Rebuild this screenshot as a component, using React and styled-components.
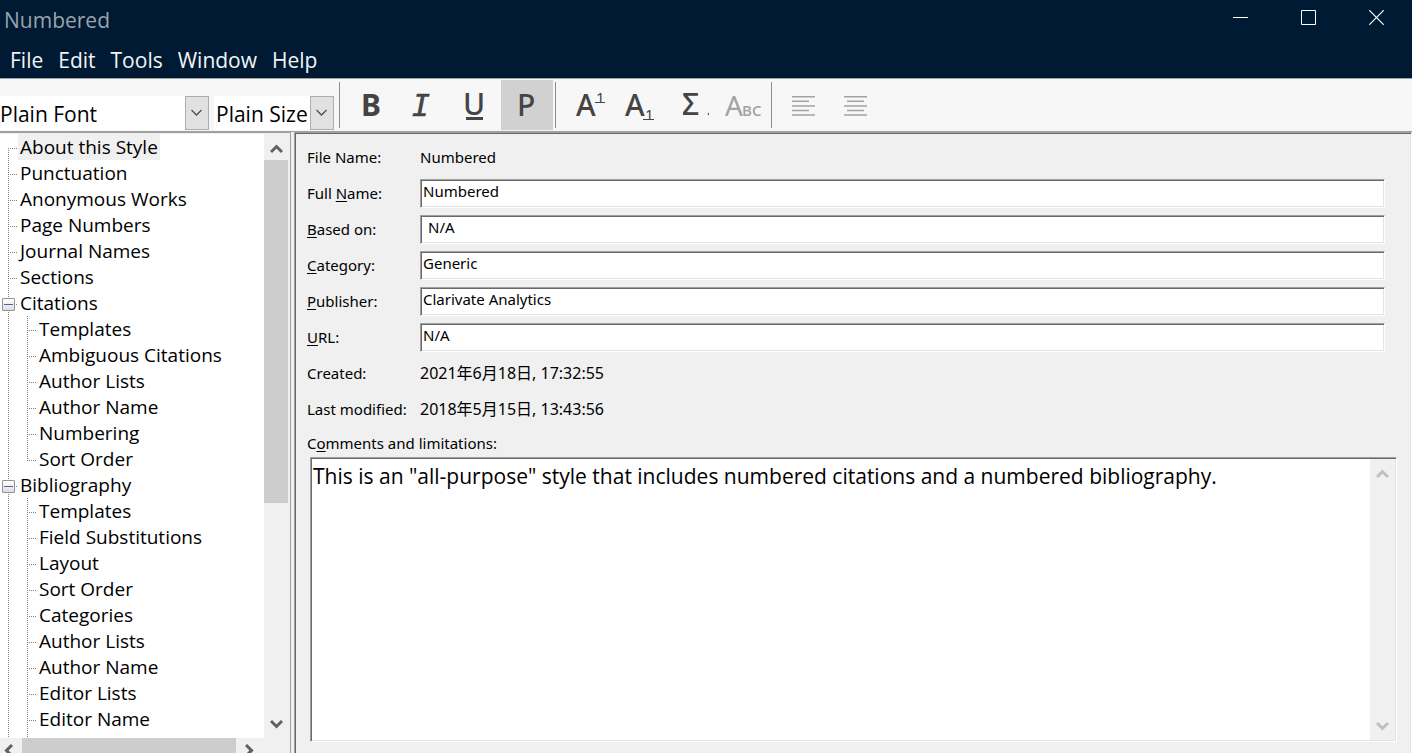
import React from "react";
import styled, { createGlobalStyle, css } from "styled-components";

const uiFont = `"Open Sans", "Noto Sans CJK SC", sans-serif`;
const formFont = `"Noto Sans", "Noto Sans CJK SC", sans-serif`;

const GlobalStyle = createGlobalStyle`
  *, *::before, *::after { box-sizing: border-box; }
  body { margin: 0; font-family: ${uiFont}; color: #000; background: #f0f0f0; }
  button, input, select, textarea { font-family: inherit; color: inherit; border-radius: 0; outline: none; }
`;

const sunken = css`
  border: 1px solid;
  border-color: #a0a0a0 #fff #fff #a0a0a0;
  box-shadow: inset 1px 1px #696969, inset -1px -1px #e3e3e3;
`;

const Window = styled.div`
  display: flex;
  flex-direction: column;
  height: 100vh;
  overflow: hidden;
`;

const Header = styled.header`
  background: #001a33;
  color: #f2f4f6;
`;

const TitleBar = styled.div`
  display: flex;
  justify-content: space-between;
  height: 40px;
  padding: 0 2px 0 4px;
`;

const Title = styled.h1`
  margin: 0;
  font-size: 21px;
  font-weight: 400;
  line-height: 40px;
  color: #99a3ad;
`;

const WindowControls = styled.div`
  display: flex;
`;

const WindowButton = styled.button`
  display: flex;
  align-items: center;
  justify-content: center;
  width: 68px;
  height: 35px;
  padding: 0;
  border: 0;
  background: none;
`;

const MenuBar = styled.nav`
  display: flex;
  gap: 15px;
  height: 38px;
  padding-left: 10px;
`;

const MenuItem = styled.button`
  padding: 0;
  border: 0;
  background: none;
  font-size: 21px;
  line-height: 40px;
`;

const Toolbar = styled.div`
  display: flex;
  align-items: flex-start;
  height: 54px;
  flex: none;
  border-top: 1px solid #a0a0a0;
  border-bottom: 1px solid #a0a0a0;
  background: #f7f7f7;
`;

const Combos = styled.div`
  display: flex;
  gap: 5px;
  padding: 17px 5px 0 0;
`;

const Combo = styled.div`
  display: grid;
  grid-template-columns: 1fr 24px;
  width: ${(p) => p.$width}px;
  height: 34px;
  background: #fff;
`;

const ComboSelect = styled.select`
  grid-area: 1 / 1 / 2 / 3;
  appearance: none;
  padding: 2px 0 0 ${(p) => p.$indent}px;
  border: 0;
  background: none;
  font-size: 21px;
  line-height: 32px;
`;

const ComboArrow = styled.span`
  grid-area: 1 / 2 / 2 / 3;
  display: flex;
  align-items: center;
  justify-content: center;
  border: 1px solid #adadad;
  background: #e1e1e1;
  pointer-events: none;
`;

const ToolGroup = styled.div`
  display: flex;
  margin-top: 1px;
  padding: 0 2px 0 5px;
`;

const ToolButton = styled.button`
  width: 52px;
  height: 50px;
  padding: 0;
  border: 0;
  background: ${(p) => (p.$active ? "#d1d1d1" : "none")};

  svg { display: block; }
`;

const Separator = styled.span`
  width: 1px;
  height: 46px;
  margin-top: 3px;
  background: #8c8c8c;
`;

const Body = styled.div`
  display: flex;
  flex: 1;
  min-height: 0;
  gap: 3px;
`;

const Sidebar = styled.aside`
  display: grid;
  grid-template: 1fr 15px / 1fr 24px;
  width: 291px;
  flex: none;
  padding: 1px 2px 0 0;
  border-top: 1px solid #a0a0a0;
  border-right: 1px solid #a0a0a0;
`;

const Tree = styled.ul`
  display: flex;
  flex-direction: column;
  min-height: 0;
  margin: 0;
  padding: 0;
  list-style: none;
  overflow: hidden;
  background: #fff;
`;

const TreeRow = styled.li`
  display: flex;
  flex: none;
  height: 26px;
`;

const TreeTail = styled.li`
  display: flex;
  flex: 1;
`;

const dotsDown = "repeating-linear-gradient(to bottom, #808080 0 1px, transparent 1px 2px)";
const dotsAcross = "repeating-linear-gradient(to right, #808080 0 1px, transparent 1px 2px)";

const vertical = {
  full: ["0", "100%"],
  down: ["14px", "12px"],
  up: ["0", "14px"],
};

const Branch = styled.span`
  display: flex;
  align-items: flex-end;
  flex: none;
  width: ${(p) => (p.$nested ? 19 : 18)}px;
  padding: 0 0 5px 2px;
  background-image: ${dotsDown}, ${dotsAcross};
  background-repeat: no-repeat;
  background-size: 1px ${(p) => vertical[p.$line][1]}, ${(p) => (p.$tick ? 9 : 0)}px 1px;
  background-position: ${(p) => (p.$nested ? 9 : 8)}px ${(p) => vertical[p.$line][0]},
    ${(p) => (p.$nested ? 9 : 8)}px 14px;
`;

const Expander = styled.button`
  display: flex;
  align-items: center;
  justify-content: center;
  width: 13px;
  height: 13px;
  padding: 0;
  border: 1px solid #919191;
  border-radius: 1px;
  background: linear-gradient(#fff, #dedede);

  &::before {
    content: "";
    width: 9px;
    height: 1px;
    background: #4b63a7;
  }
`;

const TreeLabel = styled.span`
  padding: 0 2px;
  font-size: 19px;
  line-height: 26px;
  white-space: nowrap;
  background: ${(p) => (p.$selected ? "#f0f0f0" : "none")};
`;

const ScrollColumn = styled.div`
  display: flex;
  flex-direction: column;
  align-items: center;
  width: ${(p) => p.$width}px;
  padding: 9px 0;
  background: #f0f0f0;

  svg { flex: none; }
`;

const ThumbV = styled.div`
  width: 100%;
  height: 343px;
  margin-top: 6px;
  background: #cdcdcd;
`;

const Spacer = styled.div`
  flex: 1;
`;

const ScrollRow = styled.div`
  display: flex;
  align-items: flex-start;
  overflow: hidden;
  padding: 0 10px 0 4px;

  svg { flex: none; margin-top: 6px; }
`;

const ThumbH = styled.div`
  flex: 1;
  height: 15px;
  margin: 0 9px;
  background: #cdcdcd;
`;

const Panel = styled.main`
  ${sunken}
  display: flex;
  flex-direction: column;
  flex: 1;
  min-width: 0;
  padding: 10px 14px 11px 12px;
  border-bottom: 0;
  box-shadow: inset 1px 1px #696969, inset -1px 0 #e3e3e3;
  font-family: ${formFont};
`;

const Fields = styled.div`
  display: grid;
  grid-template-columns: 113px 1fr;
  grid-auto-rows: 29px;
  row-gap: 7px;
  padding-right: 12px;
  font-size: 15px;
`;

const FieldLabel = styled.label`
  line-height: 29px;
  white-space: nowrap;
`;

const Key = styled.u`
  text-underline-offset: 2px;
  text-decoration-thickness: 1px;
`;

const FieldValue = styled.output`
  font-size: ${(p) => (p.$date ? 16 : 15)}px;
  line-height: 28px;
`;

const FieldInput = styled.input`
  ${sunken}
  width: 100%;
  height: 29px;
  padding: 0 2px 5px ${(p) => (p.$indent ? 7 : 2)}px;
  background: #fff;
  font-size: 15px;
`;

const CommentsLabel = styled.label`
  margin-top: 6px;
  font-size: 15px;
  line-height: 27px;
`;

const CommentsBox = styled.div`
  ${sunken}
  display: flex;
  flex: 1;
  min-height: 0;
  margin-left: 3px;
  padding: 1px;
  background: #fff;
  font-family: ${uiFont};
`;

const Comments = styled.textarea`
  flex: 1;
  min-width: 0;
  padding: 1px 1px;
  border: 0;
  resize: none;
  overflow: hidden;
  background: none;
  font-size: 21px;
  line-height: 32px;
`;

const arrowPaths = {
  up: "M1 9 L6.500 3.500 L12 9",
  down: "M1 3 L6.500 8.500 L12 3",
};

function Arrow({ dir, color = "#606060" }) {
  return (
    <svg width="13" height="11" viewBox="0 0 13 11" fill="none" stroke={color} strokeWidth="3">
      <path d={arrowPaths[dir]} />
    </svg>
  );
}

function SideArrow({ dir }) {
  return (
    <svg width="9" height="13" viewBox="0 0 9 13" fill="none" stroke="#606060" strokeWidth="3">
      <path d={dir === "left" ? "M8 1 L2.500 6.500 L8 12" : "M1 1 L6.500 6.500 L1 12"} />
    </svg>
  );
}

function FontCombo({ label, width, indent }) {
  return (
    <Combo $width={width}>
      <ComboSelect aria-label={label} $indent={indent} defaultValue={label}>
        <option>{label}</option>
      </ComboSelect>
      <ComboArrow>
        <svg width="12" height="8" viewBox="0 0 12 8" fill="none" stroke="#505050" strokeWidth="1.300">
          <path d="M.5 1 L5.500 6 L10.500 1" />
        </svg>
      </ComboArrow>
    </Combo>
  );
}

const ink = "#444";
const faint = "#a3a3a3";

function Tool({ name, active, children }) {
  return (
    <ToolButton aria-label={name} title={name} $active={active}>
      <svg width="52" height="50" viewBox="0 0 52 50" fill={ink} fontFamily="Noto Sans" fontSize="30">
        {children}
      </svg>
    </ToolButton>
  );
}

const tree = [
  { name: "About this Style", selected: true },
  { name: "Punctuation" },
  { name: "Anonymous Works" },
  { name: "Page Numbers" },
  { name: "Journal Names" },
  { name: "Sections" },
  {
    name: "Citations",
    children: ["Templates", "Ambiguous Citations", "Author Lists", "Author Name", "Numbering", "Sort Order"],
  },
  {
    name: "Bibliography",
    open: true,
    children: [
      "Templates",
      "Field Substitutions",
      "Layout",
      "Sort Order",
      "Categories",
      "Author Lists",
      "Author Name",
      "Editor Lists",
      "Editor Name",
    ],
  },
];

function StyleTree() {
  return (
    <Tree aria-label="Style sections">
      {tree.map((node, i) => (
        <React.Fragment key={node.name}>
          <TreeRow>
            <Branch $line={i === 0 ? "down" : "full"} $tick>
              {node.children && <Expander aria-label={`Collapse ${node.name}`} />}
            </Branch>
            <TreeLabel $selected={node.selected}>{node.name}</TreeLabel>
          </TreeRow>
          {node.children?.map((child, n) => (
            <TreeRow key={child}>
              <Branch $line="full" />
              <Branch $nested $tick $line={!node.open && n === node.children.length - 1 ? "up" : "full"} />
              <TreeLabel>{child}</TreeLabel>
            </TreeRow>
          ))}
        </React.Fragment>
      ))}
      <TreeTail aria-hidden="true">
        <Branch $line="full" />
        <Branch $nested $line="full" />
      </TreeTail>
    </Tree>
  );
}

function TextField({ id, before = "", hotkey, after, value, indent }) {
  return (
    <>
      <FieldLabel htmlFor={id}>
        {before}
        <Key>{hotkey}</Key>
        {after}
      </FieldLabel>
      <FieldInput id={id} defaultValue={value} $indent={indent} />
    </>
  );
}

function ReadOnlyField({ id, label, value, date }) {
  return (
    <>
      <FieldLabel htmlFor={id}>{label}</FieldLabel>
      <FieldValue id={id} $date={date}>{value}</FieldValue>
    </>
  );
}

export default function App() {
  return (
    <Window>
      <GlobalStyle />
      <Header>
        <TitleBar>
          <Title>Numbered</Title>
          <WindowControls>
            <WindowButton aria-label="Minimize">
              <svg width="15" height="15" viewBox="0 0 15 15" stroke="#fff"><path d="M0 7.500H15" /></svg>
            </WindowButton>
            <WindowButton aria-label="Maximize">
              <svg width="15" height="15" viewBox="0 0 15 15" fill="none" stroke="#fff"><path d="M.5 .5H14.500V14.500H.5Z" /></svg>
            </WindowButton>
            <WindowButton aria-label="Close">
              <svg width="15" height="15" viewBox="0 0 15 15" stroke="#fff" strokeWidth="1.200"><path d="M.3 .3L14.700 14.700M14.700 .3L.3 14.700" /></svg>
            </WindowButton>
          </WindowControls>
        </TitleBar>
        <MenuBar>
          {["File", "Edit", "Tools", "Window", "Help"].map((item) => (
            <MenuItem key={item}>{item}</MenuItem>
          ))}
        </MenuBar>
      </Header>

      <Toolbar>
        <Combos>
          <FontCombo label="Plain Font" width={209} indent={0} />
          <FontCombo label="Plain Size" width={120} indent={2} />
        </Combos>
        <Separator />
        <ToolGroup>
          <Tool name="Bold"><text x="16" y="36" fontWeight="700">B</text></Tool>
          <Tool name="Italic">
            <text x="15" y="36" fontFamily="DejaVu Sans Mono" fontStyle="italic" stroke={ink} strokeWidth="0.6">I</text>
          </Tool>
          <Tool name="Underline">
            <text x="14" y="35" fontWeight="500">U</text>
            <rect x="17" y="37" width="17" height="3" />
          </Tool>
          <Tool name="Plain" active><text x="16" y="36" fontWeight="500">P</text></Tool>
        </ToolGroup>
        <Separator />
        <ToolGroup>
          <Tool name="Superscript">
            <text x="15" y="36" fontWeight="500">A</text>
            <text x="35" y="23" fontSize="15">1</text>
            <rect x="34" y="22" width="10" height="1" />
          </Tool>
          <Tool name="Subscript">
            <text x="12" y="36" fontWeight="500">A</text>
            <text x="32" y="40" fontSize="15">1</text>
            <rect x="30" y="39" width="11" height="1" />
          </Tool>
          <Tool name="Symbol">
            <text x="17" y="35" fontWeight="500">Σ</text>
            <path d="M44 32V35H42.500Z" />
          </Tool>
          <Tool name="Small caps">
            <g fill={faint}>
              <text x="8" y="36" fontSize="28">A</text>
              <text x="25" y="36" fontSize="15" fontFamily="Open Sans" fontWeight="600">BC</text>
            </g>
          </Tool>
        </ToolGroup>
        <Separator />
        <ToolGroup>
          <Tool name="Align left">
            <path stroke={faint} strokeWidth="1.500" d="M15 16.700H38M15 21.300H32M15 26H38M15 30.500H32M15 35H38" />
          </Tool>
          <Tool name="Align center">
            <path stroke={faint} strokeWidth="1.500" d="M15 16.700H38M18 21.300H35M15 26H38M18 30.500H35M15 35H38" />
          </Tool>
        </ToolGroup>
      </Toolbar>

      <Body>
        <Sidebar>
          <StyleTree />
          <ScrollColumn $width={24}>
            <Arrow dir="up" />
            <ThumbV />
            <Spacer />
            <Arrow dir="down" />
          </ScrollColumn>
          <ScrollRow>
            <SideArrow dir="left" />
            <ThumbH />
            <SideArrow dir="right" />
          </ScrollRow>
        </Sidebar>

        <Panel>
          <Fields>
            <ReadOnlyField id="file-name" label="File Name:" value="Numbered" />
            <TextField id="full-name" before="Full " hotkey="N" after="ame:" value="Numbered" />
            <TextField id="based-on" hotkey="B" after="ased on:" value="N/A" indent />
            <TextField id="category" hotkey="C" after="ategory:" value="Generic" />
            <TextField id="publisher" hotkey="P" after="ublisher:" value="Clarivate Analytics" />
            <TextField id="url" hotkey="U" after="RL:" value="N/A" />
            <ReadOnlyField id="created" label="Created:" value="2021年6月18日, 17:32:55" date />
            <ReadOnlyField id="modified" label="Last modified:" value="2018年5月15日, 13:43:56" date />
          </Fields>
          <CommentsLabel htmlFor="comments">
            C<Key>o</Key>mments and limitations:
          </CommentsLabel>
          <CommentsBox>
            <Comments
              id="comments"
              defaultValue={'This is an "all-purpose" style that includes numbered citations and a numbered bibliography.'}
            />
            <ScrollColumn $width={25}>
              <Arrow dir="up" color="#bfbfbf" />
              <Spacer />
              <Arrow dir="down" color="#bfbfbf" />
            </ScrollColumn>
          </CommentsBox>
        </Panel>
      </Body>
    </Window>
  );
}
